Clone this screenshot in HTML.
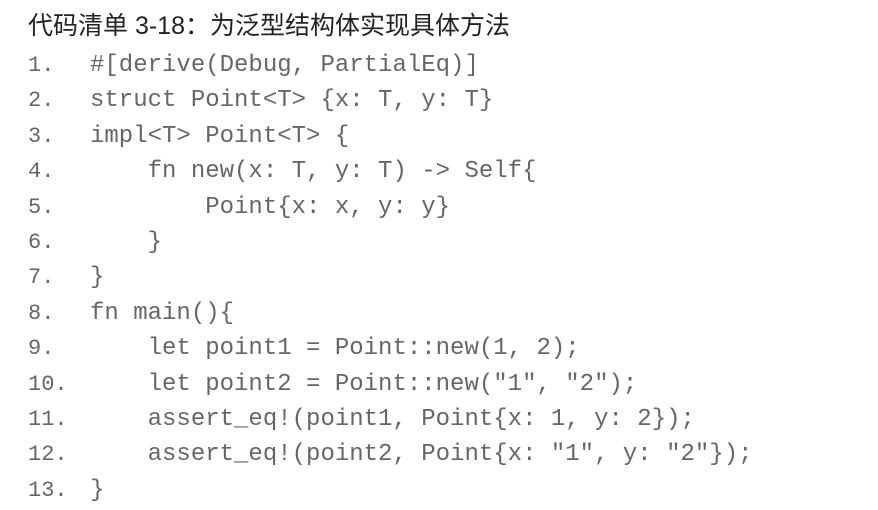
<!DOCTYPE html>
<html><head><meta charset="utf-8"><style>
body{margin:0;width:878px;height:510px;background:#fff;overflow:hidden;position:relative}
.t{position:absolute;left:28px;top:6px;font:25px "Liberation Sans","Noto Sans CJK SC",sans-serif;color:#222}
.l{position:absolute;left:28px;height:30px;line-height:30px;white-space:pre;color:#666;font-family:"Liberation Mono",monospace}
.n{display:inline-block;width:62px;font-size:22px}
.c{font-size:24px}
</style></head><body>
<div class="t">代码清单 3-18：为泛型结构体实现具体方法</div>
<div class="l" style="top:51px"><span class="n">1.</span><span class="c">#[derive(Debug, PartialEq)]</span></div>
<div class="l" style="top:86.4px"><span class="n">2.</span><span class="c">struct Point&lt;T&gt; {x: T, y: T}</span></div>
<div class="l" style="top:121.8px"><span class="n">3.</span><span class="c">impl&lt;T&gt; Point&lt;T&gt; {</span></div>
<div class="l" style="top:157.2px"><span class="n">4.</span><span class="c">    fn new(x: T, y: T) -&gt; Self{</span></div>
<div class="l" style="top:192.6px"><span class="n">5.</span><span class="c">        Point{x: x, y: y}</span></div>
<div class="l" style="top:228px"><span class="n">6.</span><span class="c">    }</span></div>
<div class="l" style="top:263.4px"><span class="n">7.</span><span class="c">}</span></div>
<div class="l" style="top:298.8px"><span class="n">8.</span><span class="c">fn main(){</span></div>
<div class="l" style="top:334.2px"><span class="n">9.</span><span class="c">    let point1 = Point::new(1, 2);</span></div>
<div class="l" style="top:369.6px"><span class="n">10.</span><span class="c">    let point2 = Point::new("1", "2");</span></div>
<div class="l" style="top:405px"><span class="n">11.</span><span class="c">    assert_eq!(point1, Point{x: 1, y: 2});</span></div>
<div class="l" style="top:440.4px"><span class="n">12.</span><span class="c">    assert_eq!(point2, Point{x: "1", y: "2"});</span></div>
<div class="l" style="top:475.8px"><span class="n">13.</span><span class="c">}</span></div>
</body></html>
